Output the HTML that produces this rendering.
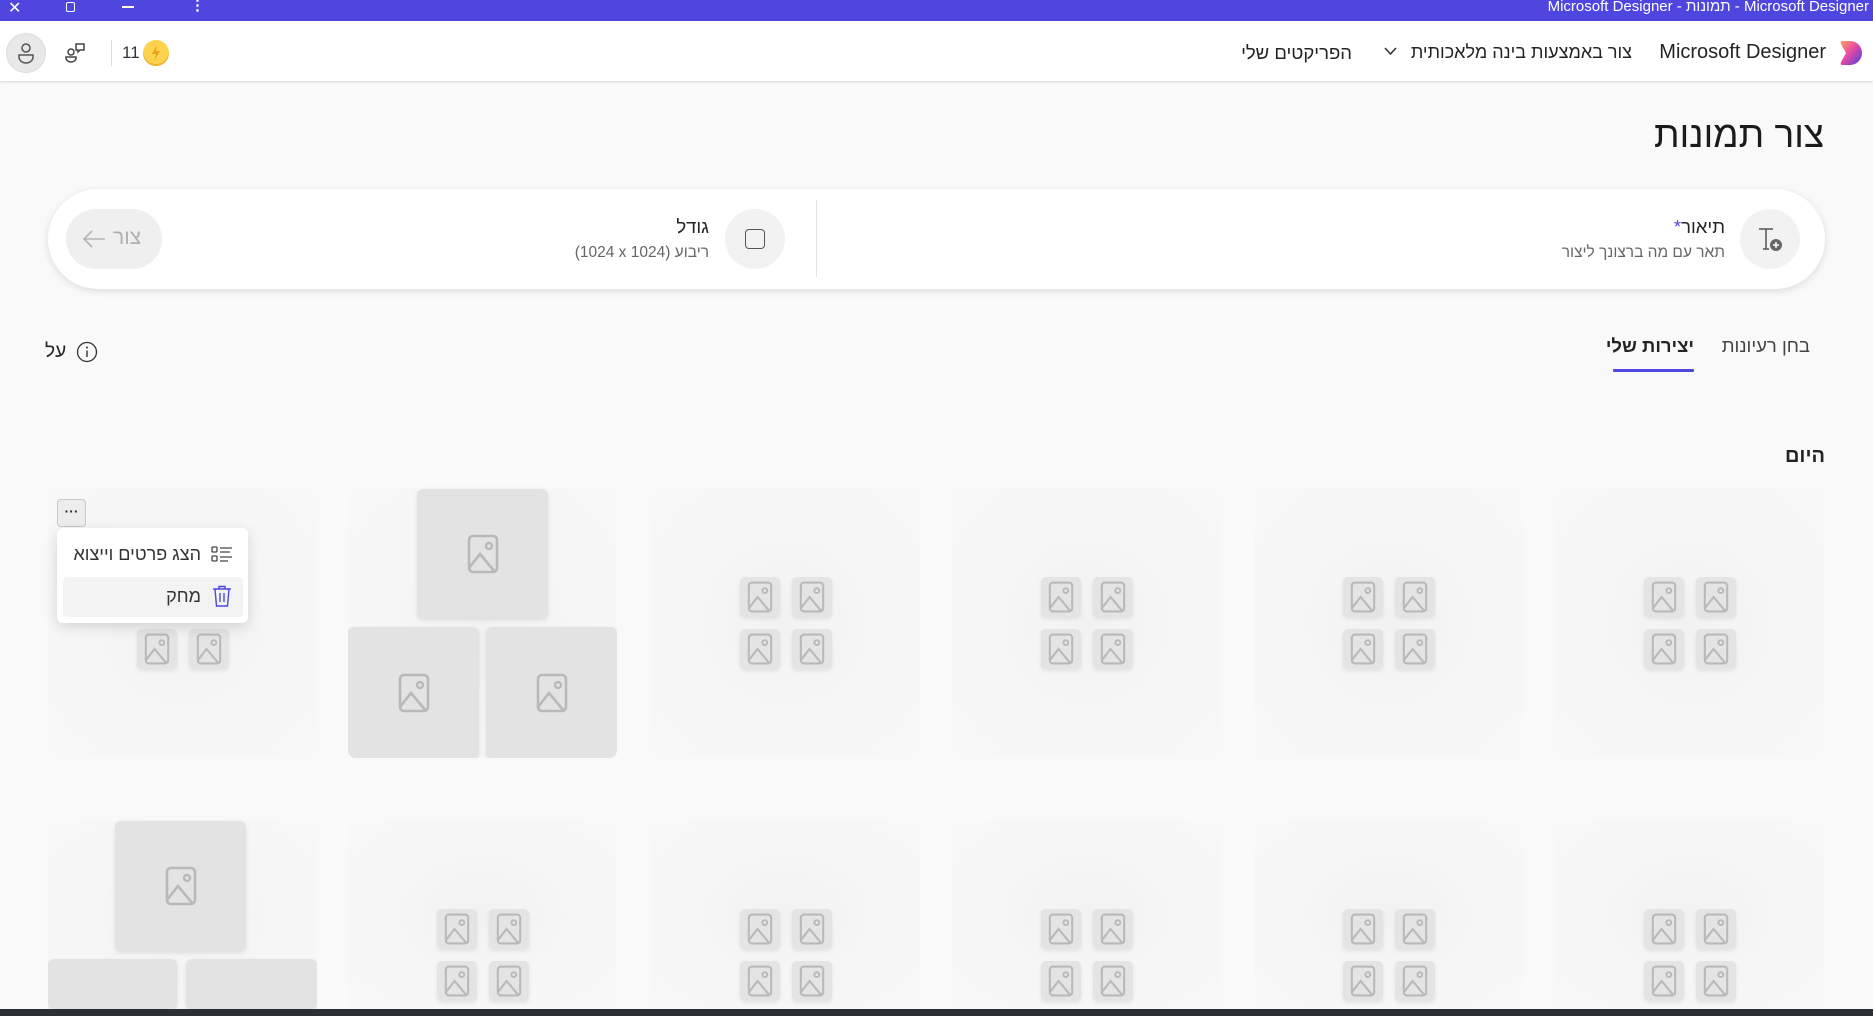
<!DOCTYPE html>
<html style="overflow:hidden;width:1873px;height:1016px"><head><meta charset="utf-8"><style>
*{box-sizing:border-box;margin:0;padding:0}
html,body{overflow:hidden}
body{width:1873px;height:1016px;background:#f9f9f9;font-family:"Liberation Sans","Noto Sans CJK SC",sans-serif;color:#242424;position:relative}
.a{position:absolute}
.card{position:absolute;width:269px;height:271px;border-radius:8px;background:radial-gradient(ellipse at 50% 50%,#f2f2f2 0%,#f6f6f6 50%,#f8f8f8 100%);overflow:hidden}
.r2{height:189px;border-radius:8px 8px 0 0}
.r2 .g{top:135px}
.g{position:absolute;left:50%;top:50%;transform:translate(-50%,-50%);display:grid;grid-template-columns:40px 40px;gap:12px}
.t{width:40px;height:40px;border-radius:5px;background:#e4e4e4;box-shadow:0 2px 4px rgba(0,0,0,.08);display:flex;align-items:center;justify-content:center}
.big{position:absolute;background:#e3e3e3;border-radius:6px;box-shadow:0 2px 5px rgba(0,0,0,.1);display:flex;align-items:center;justify-content:center}
</style></head><body>
<svg width="0" height="0" style="position:absolute"><defs><symbol id="im" viewBox="0 0 32 40"><rect x="2" y="2" width="28" height="36" rx="4" fill="none" stroke="#b9b9b9" stroke-width="2.6"/><circle cx="22" cy="12" r="3" fill="none" stroke="#b9b9b9" stroke-width="2.4"/><path d="M2 34 L13 20 L28 38" fill="none" stroke="#b9b9b9" stroke-width="2.6"/></symbol></defs></svg>

<div class="a" style="left:0;top:0;width:1873px;height:21px;background:#4f46e0"></div>
<div class="a" style="right:4px;top:0;color:#fff;font-size:15px;line-height:14px">Microsoft Designer - תמונות - Microsoft Designer</div>
<div class="a" style="left:8px;top:-2px;color:#fff;font-size:16px">✕</div>
<div class="a" style="left:66px;top:2px;width:9px;height:10px;border:1.5px solid #fff;border-radius:2px"></div>
<div class="a" style="left:122px;top:6px;width:12px;height:1.5px;background:#fff"></div>
<div class="a" style="left:190px;top:0;color:#fff;font-size:15px;line-height:12px;font-weight:bold">⋮</div>

<div class="a" style="left:0;top:21px;width:1873px;height:61px;background:#fff;border-bottom:1px solid #e0e0e0;box-shadow:0 1px 3px rgba(0,0,0,.06)"></div>
<svg class="a" style="left:1840px;top:40px" width="24" height="26" viewBox="0 0 24 26"><defs><linearGradient id="lg" x1="0" y1="0" x2="1" y2="1"><stop offset="0" stop-color="#f7a35c"/><stop offset=".45" stop-color="#e84aa5"/><stop offset="1" stop-color="#4a3fd9"/></linearGradient></defs><path d="M2 1 H10 A12 12 0 0 1 10 25 H2 Q0 25 1 22 L6 13 L1 4 Q0 1 2 1Z" fill="url(#lg)"/></svg>
<div class="a" style="right:47px;top:41px;font-size:20px;color:#242424">Microsoft Designer</div>
<div class="a" style="right:241px;top:42px;font-size:18px;direction:rtl">צור באמצעות בינה מלאכותית</div>
<svg class="a" style="left:1384px;top:47px" width="13" height="9" viewBox="0 0 13 9"><path d="M1 1 L6.5 7 L12 1" fill="none" stroke="#333" stroke-width="1.6"/></svg>
<div class="a" style="right:521px;top:42px;font-size:18.5px;direction:rtl">הפריקטים שלי</div>

<div class="a" style="left:6px;top:33px;width:40px;height:40px;border-radius:50%;background:#e8e8e8;border:1px solid #ddd"></div>
<svg class="a" style="left:16px;top:42px" width="20" height="22" viewBox="0 0 20 22"><circle cx="10" cy="6" r="4" fill="none" stroke="#555" stroke-width="1.5"/><path d="M3 13 H17 V15 A7 6 0 0 1 3 15Z" fill="none" stroke="#555" stroke-width="1.5"/></svg>
<svg class="a" style="left:65px;top:42px" width="22" height="22" viewBox="0 0 22 22"><circle cx="6" cy="10" r="3" fill="none" stroke="#444" stroke-width="1.5"/><path d="M1 15 H11 V16 A5 4 0 0 1 1 16Z" fill="none" stroke="#444" stroke-width="1.5"/><path d="M11 2 H19 V8 H15 L13 10 V8 H11Z" fill="none" stroke="#444" stroke-width="1.5"/></svg>
<div class="a" style="left:111px;top:40px;width:1px;height:26px;background:#ddd"></div>
<div class="a" style="left:122px;top:43px;font-size:17px;color:#333">11</div>
<div class="a" style="left:143px;top:40px;width:26px;height:26px;border-radius:50%;background:#fcd34d;box-shadow:inset 0 -2px 0 #f0b429"></div>
<svg class="a" style="left:149px;top:44px" width="14" height="18" viewBox="0 0 14 18"><path d="M8 1 L3 10 H7 L5 17 L11 7 H7Z" fill="#e8a317"/></svg>

<div class="a" style="right:49px;top:114px;font-size:37px;direction:rtl;color:#1b1b1b">צור תמונות</div>

<div class="a" style="left:48px;top:189px;width:1777px;height:100px;border-radius:50px;background:#fff;box-shadow:0 2px 8px rgba(0,0,0,.12)"></div>
<div class="a" style="left:1740px;top:209px;width:60px;height:60px;border-radius:50%;background:#f2f2f2"></div>
<svg class="a" style="left:1757px;top:226px" width="28" height="28" viewBox="0 0 28 28"><path d="M2 3 H16 M9 3 V23 M6 23 H12" fill="none" stroke="#555" stroke-width="1.5"/><circle cx="19" cy="19" r="6" fill="#666"/><path d="M19 16 V22 M16 19 H22" stroke="#fff" stroke-width="1.5"/></svg>
<div class="a" style="right:148px;top:216px;font-size:18.5px;direction:rtl">תיאור<span style="color:#4f46e0">*</span></div>
<div class="a" style="right:148px;top:244px;font-size:15.5px;direction:rtl;color:#666">תאר עם מה ברצונך ליצור</div>
<div class="a" style="left:816px;top:200px;width:1px;height:77px;background:#e3e3e3"></div>
<div class="a" style="left:725px;top:209px;width:60px;height:60px;border-radius:50%;background:#f2f2f2"></div>
<div class="a" style="left:745px;top:229px;width:20px;height:20px;border:1.8px solid #555;border-radius:4px"></div>
<div class="a" style="right:1164px;top:216px;font-size:18.5px;direction:rtl">גודל</div>
<div class="a" style="right:1164px;top:244px;font-size:15.5px;color:#666;direction:rtl">ריבוע <span dir="ltr">(1024 x 1024)</span></div>
<div class="a" style="left:66px;top:209px;width:96px;height:60px;border-radius:30px;background:#efefef"></div>
<svg class="a" style="left:82px;top:229px" width="24" height="20" viewBox="0 0 24 20"><path d="M23 10 H2 M10 2 L2 10 L10 18" fill="none" stroke="#b5b5b5" stroke-width="1.6"/></svg>
<div class="a" style="left:113px;top:226px;font-size:21px;color:#b0b0b0">צור</div>

<div class="a" style="right:63px;top:335px;font-size:18.5px;color:#444;direction:rtl">בחן רעיונות</div>
<div class="a" style="right:179px;top:335px;font-size:18.5px;font-weight:bold;direction:rtl">יצירות שלי</div>
<div class="a" style="left:1613px;top:369px;width:81px;height:3px;background:#4f46e0;border-radius:1px"></div>
<div class="a" style="left:45px;top:341px;font-size:19px">על</div>
<svg class="a" style="left:76px;top:341px" width="22" height="22" viewBox="0 0 22 22"><circle cx="11" cy="11" r="9.5" fill="none" stroke="#333" stroke-width="1.3"/><path d="M11 9.5 V16" stroke="#333" stroke-width="1.4"/><circle cx="11" cy="6.5" r="1" fill="#333"/></svg>
<div class="a" style="right:48px;top:445px;font-size:20px;font-weight:bold;direction:rtl">היום</div>

<!-- row 1 -->
<div class="card" style="left:48px;top:487px"><div class="g"><div class="t"><svg width="26" height="32"><use href="#im"/></svg></div><div class="t"><svg width="26" height="32"><use href="#im"/></svg></div><div class="t"><svg width="26" height="32"><use href="#im"/></svg></div><div class="t"><svg width="26" height="32"><use href="#im"/></svg></div></div></div>
<div class="card" style="left:348px;top:487px">
<div class="big" style="left:69px;top:2px;width:131px;height:129px"><svg width="32" height="40"><use href="#im"/></svg></div>
<div class="big" style="left:0;top:140px;width:131px;height:131px"><svg width="32" height="40"><use href="#im"/></svg></div>
<div class="big" style="left:138px;top:140px;width:131px;height:131px"><svg width="32" height="40"><use href="#im"/></svg></div>
</div>
<div class="card" style="left:651px;top:487px"><div class="g"><div class="t"><svg width="26" height="32"><use href="#im"/></svg></div><div class="t"><svg width="26" height="32"><use href="#im"/></svg></div><div class="t"><svg width="26" height="32"><use href="#im"/></svg></div><div class="t"><svg width="26" height="32"><use href="#im"/></svg></div></div></div>
<div class="card" style="left:952px;top:487px"><div class="g"><div class="t"><svg width="26" height="32"><use href="#im"/></svg></div><div class="t"><svg width="26" height="32"><use href="#im"/></svg></div><div class="t"><svg width="26" height="32"><use href="#im"/></svg></div><div class="t"><svg width="26" height="32"><use href="#im"/></svg></div></div></div>
<div class="card" style="left:1254px;top:487px"><div class="g"><div class="t"><svg width="26" height="32"><use href="#im"/></svg></div><div class="t"><svg width="26" height="32"><use href="#im"/></svg></div><div class="t"><svg width="26" height="32"><use href="#im"/></svg></div><div class="t"><svg width="26" height="32"><use href="#im"/></svg></div></div></div>
<div class="card" style="left:1555px;top:487px"><div class="g"><div class="t"><svg width="26" height="32"><use href="#im"/></svg></div><div class="t"><svg width="26" height="32"><use href="#im"/></svg></div><div class="t"><svg width="26" height="32"><use href="#im"/></svg></div><div class="t"><svg width="26" height="32"><use href="#im"/></svg></div></div></div>

<!-- row 2 -->
<div class="card r2" style="left:48px;top:820px">
<div class="big" style="left:67px;top:1px;width:131px;height:130px"><svg width="32" height="40"><use href="#im"/></svg></div>
<div class="big" style="left:0;top:139px;width:129px;height:50px"></div>
<div class="big" style="left:138px;top:139px;width:131px;height:50px"></div>
</div>
<div class="card r2" style="left:348px;top:820px"><div class="g"><div class="t"><svg width="26" height="32"><use href="#im"/></svg></div><div class="t"><svg width="26" height="32"><use href="#im"/></svg></div><div class="t"><svg width="26" height="32"><use href="#im"/></svg></div><div class="t"><svg width="26" height="32"><use href="#im"/></svg></div></div></div>
<div class="card r2" style="left:651px;top:820px"><div class="g"><div class="t"><svg width="26" height="32"><use href="#im"/></svg></div><div class="t"><svg width="26" height="32"><use href="#im"/></svg></div><div class="t"><svg width="26" height="32"><use href="#im"/></svg></div><div class="t"><svg width="26" height="32"><use href="#im"/></svg></div></div></div>
<div class="card r2" style="left:952px;top:820px"><div class="g"><div class="t"><svg width="26" height="32"><use href="#im"/></svg></div><div class="t"><svg width="26" height="32"><use href="#im"/></svg></div><div class="t"><svg width="26" height="32"><use href="#im"/></svg></div><div class="t"><svg width="26" height="32"><use href="#im"/></svg></div></div></div>
<div class="card r2" style="left:1254px;top:820px"><div class="g"><div class="t"><svg width="26" height="32"><use href="#im"/></svg></div><div class="t"><svg width="26" height="32"><use href="#im"/></svg></div><div class="t"><svg width="26" height="32"><use href="#im"/></svg></div><div class="t"><svg width="26" height="32"><use href="#im"/></svg></div></div></div>
<div class="card r2" style="left:1555px;top:820px"><div class="g"><div class="t"><svg width="26" height="32"><use href="#im"/></svg></div><div class="t"><svg width="26" height="32"><use href="#im"/></svg></div><div class="t"><svg width="26" height="32"><use href="#im"/></svg></div><div class="t"><svg width="26" height="32"><use href="#im"/></svg></div></div></div>

<!-- menu -->
<div class="a" style="left:57px;top:499px;width:29px;height:28px;border:1px solid #c8c8c8;border-radius:4px;background:#ededed;text-align:center;font-size:14px;line-height:22px;font-weight:bold;color:#333">···</div>
<div class="a" style="left:57px;top:528px;width:191px;height:95px;background:#fff;border-radius:6px;box-shadow:0 4px 14px rgba(0,0,0,.14)"></div>
<div class="a" style="left:63px;top:577px;width:180px;height:40px;background:#f3f3f3;border-radius:4px"></div>
<svg class="a" style="left:211px;top:545px" width="22" height="18" viewBox="0 0 22 18"><rect x="1" y="2" width="5" height="5" rx="1" fill="none" stroke="#444" stroke-width="1.3"/><rect x="1" y="11" width="5" height="5" rx="1" fill="none" stroke="#444" stroke-width="1.3"/><path d="M9 3 H21 M9 7 H19 M9 12 H21 M9 16 H17" stroke="#444" stroke-width="1.3"/></svg>
<div class="a" style="right:1672px;top:544px;font-size:18px;direction:rtl;color:#333">הצג פרטים וייצוא</div>
<svg class="a" style="left:212px;top:585px" width="20" height="23" viewBox="0 0 20 23"><path d="M1 4 H19 M7 4 V1.5 H13 V4 M3 4 L4.5 21 H15.5 L17 4 M8 8 V17 M12 8 V17" fill="none" stroke="#4f46e0" stroke-width="1.4"/></svg>
<div class="a" style="right:1672px;top:586px;font-size:18px;direction:rtl;color:#333">מחק</div>

<div class="a" style="left:0;top:1009px;width:1873px;height:7px;background:#2b2f36"></div>
</body></html>
